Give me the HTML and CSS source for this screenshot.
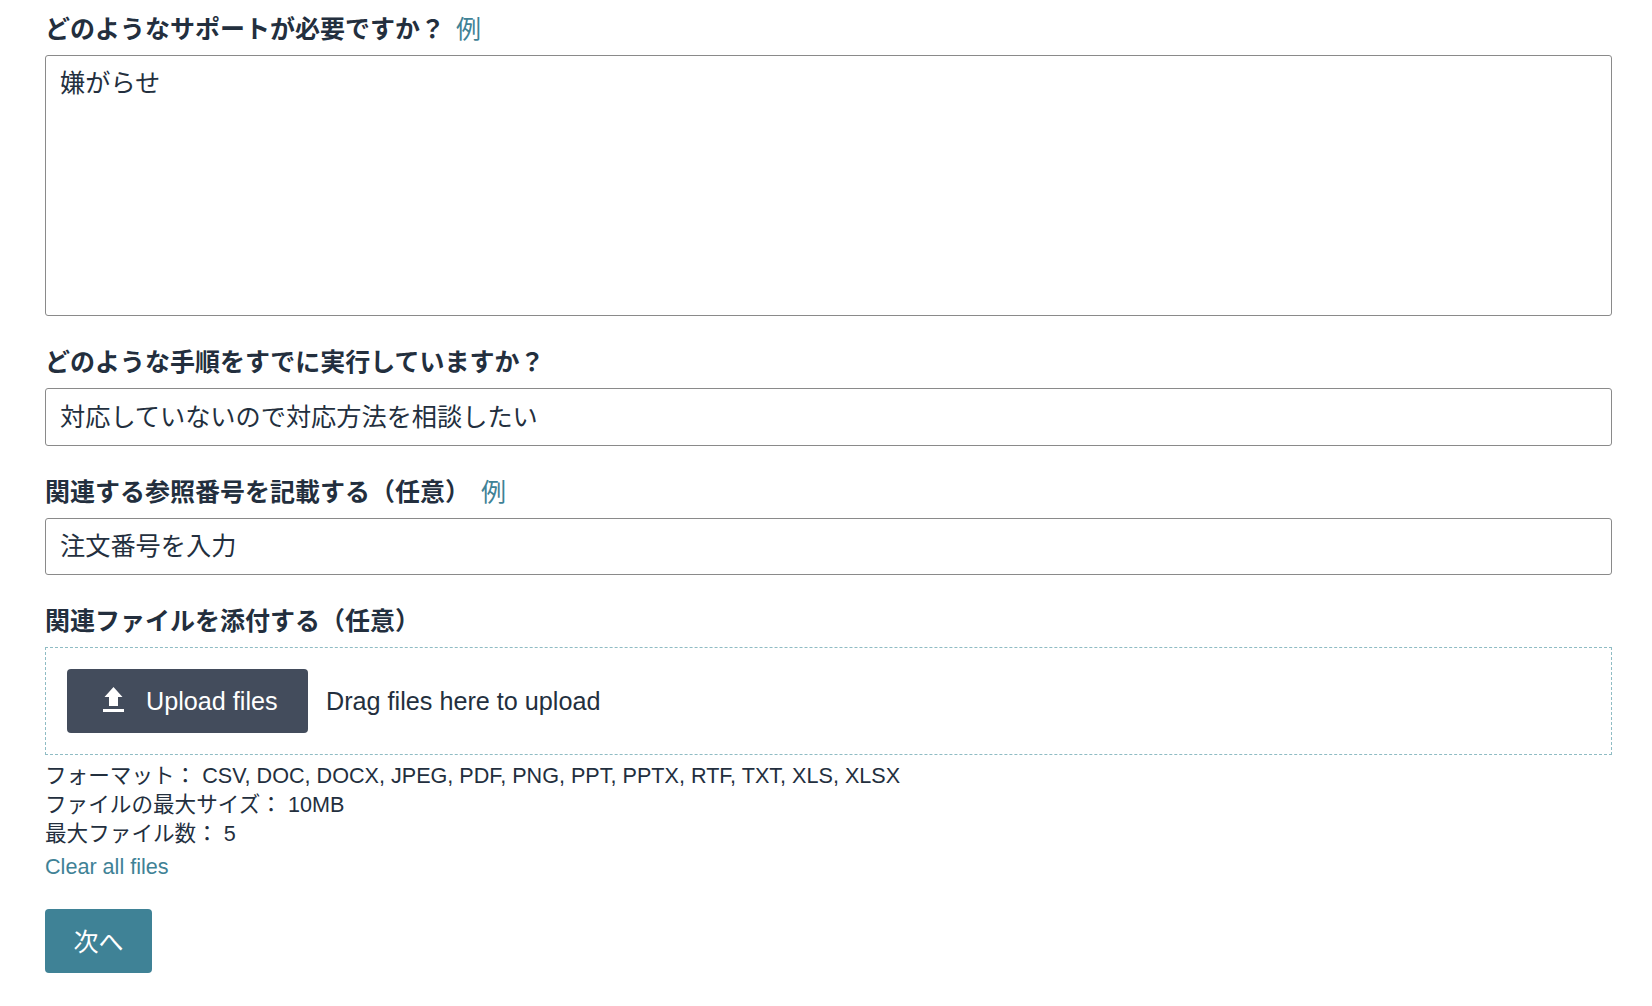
FILE: index.html
```html
<!DOCTYPE html>
<html lang="ja">
<head>
<meta charset="utf-8">
<title>サポート</title>
<link rel="stylesheet" href="styles.css">
</head>
<body>
<form class="form">
  <div class="field field-first">
    <label class="label">どのようなサポートが必要ですか？<a class="example" href="#">例</a></label>
    <textarea class="control textarea">嫌がらせ</textarea>
  </div>
  <div class="field field-input">
    <label class="label">どのような手順をすでに実行していますか？</label>
    <input class="control input input-filled" type="text" value="対応していないので対応方法を相談したい">
  </div>
  <div class="field field-input">
    <label class="label">関連する参照番号を記載する（任意）<a class="example" href="#">例</a></label>
    <input class="control input input-short" type="text" placeholder="注文番号を入力">
  </div>
  <div class="field field-upload">
    <label class="label">関連ファイルを添付する（任意）</label>
    <div class="dropzone">
      <button class="upload" type="button">
        <svg class="upload-icon" viewBox="0 0 21 25" aria-hidden="true"><path d="M10.5 0 19.5 10H15V19H6V10H1.5Z"/><rect x="0" y="22" width="21" height="3"/></svg>
        <span>Upload files</span>
      </button>
      <span class="drag">Drag files here to upload</span>
    </div>
  </div>
  <div class="constraints">
    <div>フォーマット： CSV, DOC, DOCX, JPEG, PDF, PNG, PPT, PPTX, RTF, TXT, XLS, XLSX</div>
    <div>ファイルの最大サイズ： 10MB</div>
    <div>最大ファイル数： 5</div>
  </div>
  <a class="clear" href="#">Clear all files</a>
  <button class="next" type="button">次へ</button>
</form>
</body>
</html>
```
FILE: styles.css
```css
* { box-sizing: border-box; }
html, body { margin: 0; padding: 0; background: #fff; }
body {
  font-family: "Liberation Sans", "Noto Sans CJK JP", sans-serif;
  color: #232f3e;
}
.form {
  display: flex;
  flex-direction: column;
  align-items: flex-start;
  padding: 12px 40px 32px 45px;
  height: 1006px;
}
.field { width: 100%; display: flex; flex-direction: column; }
.label {
  display: block;
  font-size: 25px;
  line-height: 32px;
  font-weight: 700;
  height: 43px;
  padding-top: 1px;
  color: #232f3e;
}
.example {
  font-weight: 400;
  color: #3f8296;
  text-decoration: none;
  margin-left: 11px;
}
.control {
  width: 100%;
  border: 1px solid #8a8a8a;
  border-radius: 3px;
  background: #fff;
  color: #232f3e;
  font-family: inherit;
  font-size: 25.2px;
  padding: 0 14px;
  outline: none;
  display: block;
}
.control::placeholder { color: #232f3e; opacity: 1; }
.textarea { height: 261px; resize: none; padding-top: 9px; line-height: 36px; }
.input { height: 58px; }
.input-filled { padding-bottom: 4px; }
.input-short { height: 57px; }
.field-input { margin-top: 29px; }
.field-upload { margin-top: 29px; }
.dropzone {
  display: flex;
  align-items: center;
  height: 108px;
  border: 1px dashed #8fbcc4;
  padding-left: 21px;
}
.upload {
  display: flex;
  align-items: center;
  height: 64px;
  width: 241px;
  padding: 0 0 0 36px;
  border: 0;
  border-radius: 4px;
  background: #434c5c;
  color: #fff;
  font-family: inherit;
  font-size: 25.2px;
}
.upload-icon { width: 21px; height: 25px; fill: #fff; margin: 0 22px 3px 0; }
.drag { font-size: 25.2px; margin-left: 18px; }
.constraints { margin-top: 6px; font-size: 21.6px; line-height: 29px; }
.clear {
  display: block;
  margin-top: 4px;
  font-size: 21.6px;
  line-height: 29px;
  color: #3f8296;
  text-decoration: none;
}
.next {
  margin-top: 28px;
  width: 107px;
  height: 64px;
  padding: 0 0 3px;
  border: 0;
  border-radius: 4px;
  background: #3f8296;
  color: #fff;
  font-family: inherit;
  font-size: 25px;
}
```
